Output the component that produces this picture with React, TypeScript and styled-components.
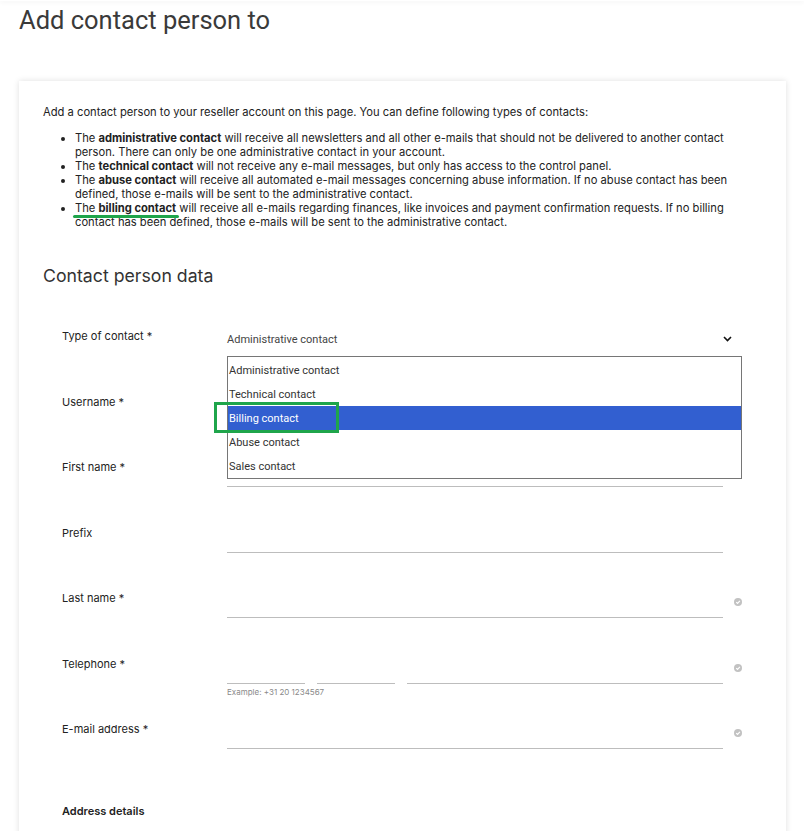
import styled, { createGlobalStyle } from "styled-components";

const GlobalStyle = createGlobalStyle`
  html { overflow: hidden; }
  body {
    margin: 0;
    background: #fff;
    font-family: Inter, "Liberation Sans", sans-serif;
    color: #222;
  }
  * { box-sizing: border-box; }
`;

const TopBar = styled.div`
  height: 1px;
  box-shadow: 0 1px 4px rgba(0, 0, 0, 0.12);
`;

const PageTitle = styled.h1`
  margin: 5px 0 0 19px;
  font-family: Roboto, "Liberation Sans", sans-serif;
  font-weight: 400;
  font-size: 25.5px;
  line-height: 28px;
  color: #3a3a3a;
`;

const Card = styled.section`
  margin: 47px 18px 0 19px;
  padding: 24px 24px 40px;
  background: #fff;
  box-shadow: 0 0 6px rgba(0, 0, 0, 0.13);
`;

const Intro = styled.p`
  margin: 0;
  font-size: 11.2px;
  line-height: 14px;
`;

const TypeList = styled.ul`
  margin: 12px 0 0;
  padding-left: 32px;
  font-size: 11.2px;
  line-height: 14px;
`;

const Marked = styled.span`
  position: relative;
  &::after {
    content: "";
    position: absolute;
    left: -2px;
    right: -3px;
    bottom: -3px;
    height: 3px;
    border-radius: 2px;
    background: #1fa54b;
  }
`;

const SectionTitle = styled.h2`
  margin: 35px 0 0;
  font-family: Inter, "Liberation Sans", sans-serif;
  font-weight: 400;
  font-size: 17.7px;
  line-height: 24px;
  color: #333;
`;

const Form = styled.div`
  margin-top: 38px;
  padding-left: 19px;
`;

const Row = styled.div`
  display: grid;
  grid-template-columns: 165px 496px 1fr;
  height: 65.5px;
`;

const Label = styled.div<{ $bold?: boolean }>`
  font-size: 11px;
  line-height: 20px;
  font-weight: ${(p) => (p.$bold ? 600 : 400)};
  color: #222;
`;

const SelectBox = styled.div`
  position: relative;
  grid-column: span 2;
  width: 515px;
  height: 31px;
  padding-top: 7px;
  font-family: Roboto, "Liberation Sans", sans-serif;
  font-size: 11px;
  line-height: 14px;
  color: #444;
  display: flex;
  justify-content: space-between;
`;

const Chevron = styled.svg`
  display: block;
  margin: 3px 10px 0 0;
`;

const OptionList = styled.div`
  position: absolute;
  top: 30px;
  left: 0;
  width: 515px;
  padding-top: 1px;
  border: 1px solid #767676;
  background: #fff;
  z-index: 2;
`;

const Option = styled.div<{ $active?: boolean }>`
  height: 24px;
  overflow: hidden;
  padding-left: 1px;
  font-family: Roboto, "Liberation Sans", sans-serif;
  font-size: 11px;
  line-height: 25px;
  color: ${(p) => (p.$active ? "#fff" : "#333")};
  background: ${(p) => (p.$active ? "#325fd0" : "transparent")};
`;

const Highlight = styled.div`
  position: absolute;
  left: -14px;
  top: 45px;
  width: 125px;
  height: 31px;
  border: 3px solid #1fa54b;
  pointer-events: none;
`;

const Field = styled.div`
  height: 30px;
  border-bottom: 1px solid #bdbdbd;
`;

const PhoneFields = styled.div`
  display: grid;
  grid-template-columns: 78px 78px 1fr;
  column-gap: 12px;
`;

const Hint = styled.div`
  margin-top: 3px;
  font-size: 8px;
  line-height: 10px;
  color: #8a8a8a;
`;

const CheckWrap = styled.div`
  padding: 10px 0 0 11px;
  svg { display: block; }
`;

function CheckIcon() {
  return (
    <CheckWrap>
      <svg width="8" height="8" viewBox="0 0 8 8">
        <circle cx="4" cy="4" r="4" fill="#c2c2c2" />
        <path d="M2.2 4.1 L3.5 5.3 L5.9 2.8" stroke="#fff" strokeWidth="1.2" fill="none" />
      </svg>
    </CheckWrap>
  );
}

const options = [
  "Administrative contact",
  "Technical contact",
  "Billing contact",
  "Abuse contact",
  "Sales contact",
];

export default function App() {
  return (
    <>
      <GlobalStyle />
      <TopBar />
      <PageTitle>Add contact person to</PageTitle>
      <Card>
        <Intro>
          Add a contact person to your reseller account on this page. You can define following types of contacts:
        </Intro>
        <TypeList>
          <li>
            The <b>administrative contact</b> will receive all newsletters and all other e-mails that should not be delivered to another contact
            <br />
            person. There can only be one administrative contact in your account.
          </li>
          <li>
            The <b>technical contact</b> will not receive any e-mail messages, but only has access to the control panel.
          </li>
          <li>
            The <b>abuse contact</b> will receive all automated e-mail messages concerning abuse information. If no abuse contact has been
            <br />
            defined, those e-mails will be sent to the administrative contact.
          </li>
          <li>
            <Marked>
              The <b>billing contact</b>
            </Marked>{" "}
            will receive all e-mails regarding finances, like invoices and payment confirmation requests. If no billing
            <br />
            contact has been defined, those e-mails will be sent to the administrative contact.
          </li>
        </TypeList>

        <SectionTitle>Contact person data</SectionTitle>

        <Form>
          <Row>
            <Label>Type of contact *</Label>
            <SelectBox>
              <span>Administrative contact</span>
              <Chevron width="9" height="6" viewBox="0 0 9 6">
                <path d="M1 1 L4.5 4.5 L8 1" stroke="#111" strokeWidth="1.6" fill="none" />
              </Chevron>
              <OptionList>
                {options.map((o) => (
                  <Option key={o} $active={o === "Billing contact"}>
                    {o}
                  </Option>
                ))}
                <Highlight />
              </OptionList>
            </SelectBox>
          </Row>
          <Row>
            <Label>Username *</Label>
            <Field />
          </Row>
          <Row>
            <Label>First name *</Label>
            <Field />
          </Row>
          <Row>
            <Label>Prefix</Label>
            <Field />
          </Row>
          <Row>
            <Label>Last name *</Label>
            <Field />
            <CheckIcon />
          </Row>
          <Row>
            <Label>Telephone *</Label>
            <div>
              <PhoneFields>
                <Field />
                <Field />
                <Field />
              </PhoneFields>
              <Hint>Example: +31 20 1234567</Hint>
            </div>
            <CheckIcon />
          </Row>
          <Row>
            <Label>E-mail address *</Label>
            <Field />
            <CheckIcon />
          </Row>
          <Label $bold style={{ marginTop: 16 }}>
            Address details
          </Label>
        </Form>
      </Card>
    </>
  );
}
